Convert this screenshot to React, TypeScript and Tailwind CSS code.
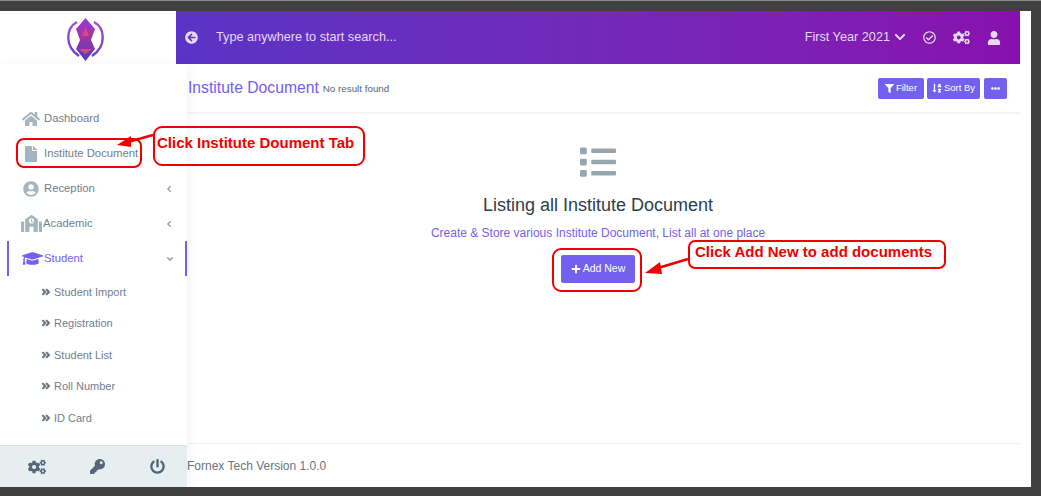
import {
  FaHome,
  FaFile,
  FaUserCircle,
  FaSchool,
  FaGraduationCap,
  FaAngleDoubleRight,
  FaAngleLeft,
  FaAngleDown,
  FaCogs,
  FaKey,
  FaPowerOff,
  FaArrowCircleLeft,
  FaRegCheckCircle,
  FaUser,
  FaFilter,
  FaSortAlphaDown,
  FaEllipsisH,
  FaPlus,
  FaList,
  FaChevronDown,
} from "react-icons/fa";

const subItems = ["Student Import", "Registration", "Student List", "Roll Number", "ID Card"];

function Logo() {
  return (
    <svg width="41" height="46" viewBox="0 0 41 46" fill="none">
      <defs>
        <linearGradient id="logoFill" x1="0" y1="0" x2="0" y2="1">
          <stop offset="0" stopColor="#9a3bd6" />
          <stop offset="0.45" stopColor="#a0359f" />
          <stop offset="1" stopColor="#4a3ccb" />
        </linearGradient>
        <linearGradient id="logoRing" x1="0" y1="0" x2="0" y2="1">
          <stop offset="0" stopColor="#b04bd0" />
          <stop offset="1" stopColor="#5f43d0" />
        </linearGradient>
      </defs>
      <path d="M12 6 C1 12 -1 30 14 40" stroke="url(#logoRing)" strokeWidth="2.4" />
      <path d="M29 6 C40 12 42 30 27 40" stroke="url(#logoRing)" strokeWidth="2.4" />
      <path d="M20.5 2 L30 13 L26 24 L30 33 L20.5 45 L11 33 L15 24 L11 13 Z" fill="url(#logoFill)" />
      <path d="M20.5 11 L24 20 L17 20 Z" fill="#e0457f" />
      <path d="M14 33 L27 33 L20.5 38 Z" fill="#e0457f" />
    </svg>
  );
}

function MenuItem({ icon, label, chevron, textClass }: { icon: React.ReactNode; label: string; chevron?: boolean; textClass?: string }) {
  return (
    <div className="flex h-[35px] items-center pl-[22px] pr-[13px] text-[#71808e]">
      <span className="mr-[4px] flex w-[18px] justify-center text-[#a5b5bf]">{icon}</span>
      <span className={`text-[11.3px] ${textClass ?? ""}`}>{label}</span>
      {chevron && <FaAngleLeft className="ml-auto text-[10px] text-[#9aa5ae]" />}
    </div>
  );
}

function ActionButton({ children, className }: { children: React.ReactNode; className: string }) {
  return (
    <button className={`flex h-[21px] items-center justify-center gap-[2px] rounded-[2px] bg-[#7460ee] text-[9.5px] text-white ${className}`}>
      {children}
    </button>
  );
}

export default function App() {
  return (
    <div className="relative h-[496px] w-[1041px] overflow-hidden border-t border-[#8a8a8a] bg-[#404040] pb-[9px] pr-[10px] pt-[10px] font-['Liberation_Sans',Arial,sans-serif]">
      <div className="flex h-full flex-col bg-white">
        {/* Top bar */}
        <div className="flex h-[53px] shrink-0 pr-[11px]">
          <div className="flex w-[176px] items-start justify-center pr-[5px] pt-[5px]">
            <Logo />
          </div>
          <div className="flex flex-1 items-center bg-gradient-to-r from-[#5a34c6] to-[#8810ad] pl-[9px] pr-[19px] text-[#e6d9f5]">
            <FaArrowCircleLeft className="text-[13px]" />
            <span className="ml-[18px] text-[12.7px]">Type anywhere to start search...</span>
            <span className="ml-auto flex items-center gap-[4px] text-[12.7px]">
              First Year 2021 <FaChevronDown className="text-[12px]" />
            </span>
            <FaRegCheckCircle className="ml-[17px] text-[13px]" />
            <FaCogs className="ml-[17px] text-[17px]" />
            <FaUser className="ml-[17px] text-[14px]" />
          </div>
        </div>

        <div className="flex min-h-0 flex-1">
          {/* Sidebar */}
          <aside className="z-10 flex w-[187px] shrink-0 flex-col shadow-[4px_0_10px_rgba(0,0,0,0.04)]">
            <nav className="flex-1 pt-[37px]">
              <MenuItem icon={<FaHome className="shrink-0 text-[18px]" />} label="Dashboard" />
              <MenuItem icon={<FaFile className="shrink-0 text-[16px]" />} label="Institute Document" />
              <MenuItem icon={<FaUserCircle className="shrink-0 text-[16px]" />} label="Reception" chevron />
              <MenuItem icon={<FaSchool className="shrink-0 text-[21px]" />} label="Academic" chevron textClass="-ml-px" />
              <div className="ml-[7px] flex h-[35px] items-center border-x-2 border-[#7460ee] pl-[13px] pr-[10px] text-[#7460ee]">
                <span className="mr-[3px] flex w-[20px] justify-center">
                  <FaGraduationCap className="shrink-0 text-[21px]" />
                </span>
                <span className="-ml-px text-[11.3px]">Student</span>
                <FaAngleDown className="ml-auto text-[10px] text-[#9aa5ae]" />
              </div>
              <ul>
                {subItems.map((item) => (
                  <li key={item} className="flex h-[31.5px] items-center pl-[41px] text-[11px] text-[#71808e]">
                    <FaAngleDoubleRight className="mr-[3px] text-[10px] text-[#5f6f7d] [stroke-width:30px]" />
                    {item}
                  </li>
                ))}
              </ul>
            </nav>
            <div className="flex h-[42px] shrink-0 items-center border-t border-[#d8e2e2] bg-[#e6eef0] pl-[7px] text-[#54667a]">
              <span className="flex w-[60px] justify-center"><FaCogs className="text-[18px]" /></span>
              <span className="flex w-[60px] justify-center"><FaKey className="text-[15px]" /></span>
              <span className="flex w-[60px] justify-center"><FaPowerOff className="text-[15px]" /></span>
            </div>
          </aside>

          {/* Main */}
          <main className="flex min-w-0 flex-1 flex-col">
            <div className="mr-[11px] flex h-[50px] shrink-0 items-center border-b-2 border-[#f3f3f3] pl-[1px] pr-[13px]">
              <h1 className="text-[15.7px] font-normal text-[#7460ee]">Institute Document</h1>
              <span className="ml-[4px] mt-[3px] text-[9.8px] text-[#54667a]">No result found</span>
              <div className="ml-auto flex gap-[3px]">
                <ActionButton className="w-[46px]"><FaFilter className="text-[9px]" />Filter</ActionButton>
                <ActionButton className="w-[53px]"><FaSortAlphaDown className="text-[10px]" />Sort By</ActionButton>
                <ActionButton className="ml-[1px] w-[23px]"><FaEllipsisH className="text-[9px]" /></ActionButton>
              </div>
            </div>
            <div className="flex flex-1 flex-col items-center pr-[22px] pt-[30px]">
              <FaList className="text-[36px] text-[#96a6ae]" />
              <h2 className="mt-[13px] text-[18px] font-normal leading-[24px] text-[#2f3d4a]">Listing all Institute Document</h2>
              <p className="mt-[8px] text-[12px] leading-[16px] text-[#7460ee]">Create &amp; Store various Institute Document, List all at one place</p>
              <button className="mt-[14px] flex h-[28px] w-[74px] items-center justify-center gap-[2px] rounded-[2px] bg-[#7460ee] text-[10.5px] text-white">
                <FaPlus className="text-[10px]" />Add New
              </button>
            </div>
            <div className="mr-[11px] flex h-[44px] shrink-0 items-center border-t border-[#f1f1f1] text-[12px] text-[#67757c]">
              Fornex Tech Version 1.0.0
            </div>
          </main>
        </div>
      </div>

      {/* Red tutorial annotations */}
      <div className="absolute left-[16px] top-[137px] h-[30px] w-[126px] rounded-[8px] border-[2.5px] border-[#f00000]" />
      <div className="absolute left-[153px] top-[125px] flex h-[40px] w-[212px] items-center rounded-[9px] border-[2.5px] border-[#f00000] bg-white pb-[6px] pl-[2px] text-[15px] font-bold text-[#f00000]">
        Click Institute Doument Tab
      </div>
      <div className="absolute left-[552px] top-[247px] h-[44px] w-[90px] rounded-[9px] border-[2.5px] border-[#f00000]" />
      <div className="absolute left-[688px] top-[239px] flex h-[29px] w-[258px] items-center rounded-[7px] border-[2.5px] border-[#f00000] bg-white pb-[4px] pl-[5px] text-[15px] font-bold text-[#f00000]">
        Click Add New to add documents
      </div>
      <svg className="pointer-events-none absolute left-0 top-0" width="1041" height="496">
        <path d="M153 134 L128 141" stroke="#f00000" strokeWidth="2.5" />
        <path d="M117 144 L131 135 L131 146 Z" fill="#f00000" />
        <path d="M688 258 L658 267" stroke="#f00000" strokeWidth="2.5" />
        <path d="M645 272 L660 261 L662 273 Z" fill="#f00000" />
      </svg>
    </div>
  );
}
